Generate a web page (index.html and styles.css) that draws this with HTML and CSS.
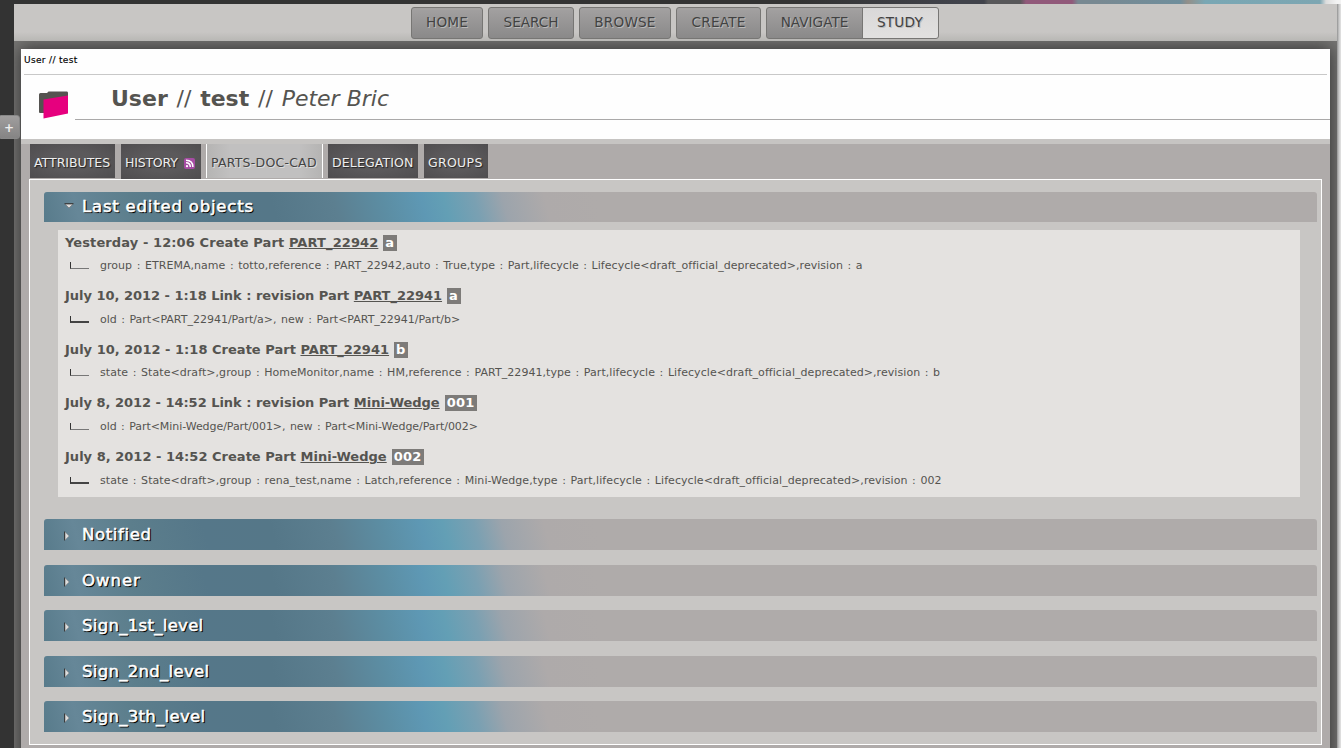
FILE: index.html
```html
<!DOCTYPE html>
<html lang="en">
<head>
<meta charset="utf-8">
<title>User // test</title>
<link rel="stylesheet" href="styles.css">
</head>
<body>
<div class="art-strip"></div>
<div class="shell">
  <nav class="nav">
    <a class="btn home">HOME</a><a class="btn search">SEARCH</a><a class="btn browse">BROWSE</a><a class="btn create">CREATE</a><a class="btn navigate">NAVIGATE</a><a class="btn study">STUDY</a>
  </nav>
  <div class="well">
    <main class="page">
      <header class="head">
        <div class="crumb"><span>User // test</span></div>
        <div class="title-row">
          <svg class="folder" width="30" height="29" viewBox="0 0 30 29"><path d="M0 3.5Q0 2 1.5 2H8L9.500 .5H28Q29 .5 29 2V22H1Q0 22 0 21Z" fill="#555350"/><path d="M4.500 5.500L29 4.500V22.500L4.500 27.500Z" fill="none"/><path d="M4.500 8.500L29 4.500V22.500L4.500 27.500Z" fill="#e6007e"/></svg>
          <h1 class="title"><b>User</b> // <b>test</b> // <i>Peter Bric</i></h1>
        </div>
      </header>
      <div class="tabs">
        <a class="tab t1"><span>ATTRIBUTES</span></a>
        <a class="tab t2"><span>HISTORY</span><svg class="rss" width="11" height="11" viewBox="0 0 11 11"><rect width="11" height="11" rx="2" fill="#a64ca3"/><circle cx="3" cy="8.200" r="1.100" fill="#fff"/><path d="M2 4.700Q6.300 4.700 6.300 9M2 2.200Q8.900 2.200 8.900 9" fill="none" stroke="#fff" stroke-width="1.500"/></svg></a>
        <a class="tab t3"><span>PARTS-DOC-CAD</span></a>
        <a class="tab t4"><span>DELEGATION</span></a>
        <a class="tab t5"><span>GROUPS</span></a>
      </div>
      <section class="panel">
        <h2 class="bar open"><svg class="arrow" width="10" height="6" viewBox="0 0 10 6"><path d="M1 1H9L5 5Z" fill="#ddd" stroke="#777" stroke-width=".7"/><path d="M.5 .7H9.500" stroke="#333"/></svg><span class="b1">Last edited objects</span></h2>
        <div class="log">
          <div class="entry"><h3><span class="l1">Yesterday - 12:06 Create Part <u>PART_22942</u></span><em>a</em></h3><p><i class="elbow"></i><span class="d1">group : ETREMA,name : totto,reference : PART_22942,auto : True,type : Part,lifecycle : Lifecycle&lt;draft_official_deprecated&gt;,revision : a</span></p></div>
          <div class="entry up"><h3><span class="l2">July 10, 2012 - 1:18 Link : revision Part <u>PART_22941</u></span><em>a</em></h3><p><i class="elbow thick"></i><span class="d2">old : Part&lt;PART_22941/Part/a&gt;, new : Part&lt;PART_22941/Part/b&gt;</span></p></div>
          <div class="entry"><h3><span class="l3">July 10, 2012 - 1:18 Create Part <u>PART_22941</u></span><em>b</em></h3><p><i class="elbow"></i><span class="d3">state : State&lt;draft&gt;,group : HomeMonitor,name : HM,reference : PART_22941,type : Part,lifecycle : Lifecycle&lt;draft_official_deprecated&gt;,revision : b</span></p></div>
          <div class="entry up"><h3><span class="l4">July 8, 2012 - 14:52 Link : revision Part <u>Mini-Wedge</u></span><em>001</em></h3><p><i class="elbow"></i><span class="d4">old : Part&lt;Mini-Wedge/Part/001&gt;, new : Part&lt;Mini-Wedge/Part/002&gt;</span></p></div>
          <div class="entry"><h3><span class="l5">July 8, 2012 - 14:52 Create Part <u>Mini-Wedge</u></span><em>002</em></h3><p class="low"><i class="elbow thick"></i><span class="d5">state : State&lt;draft&gt;,group : rena_test,name : Latch,reference : Mini-Wedge,type : Part,lifecycle : Lifecycle&lt;draft_official_deprecated&gt;,revision : 002</span></p></div>
        </div>
        <div class="closed">
          <h2 class="bar"><svg class="arrow" width="6" height="10" viewBox="0 0 6 10"><path d="M1 1V9L5 5Z" fill="#ddd" stroke="#999" stroke-width=".7"/><path d="M.6 .5V9.500" stroke="#333"/></svg><span class="b2">Notified</span></h2>
          <h2 class="bar"><svg class="arrow" width="6" height="10" viewBox="0 0 6 10"><path d="M1 1V9L5 5Z" fill="#ddd" stroke="#999" stroke-width=".7"/><path d="M.6 .5V9.500" stroke="#333"/></svg><span class="b3">Owner</span></h2>
          <h2 class="bar"><svg class="arrow" width="6" height="10" viewBox="0 0 6 10"><path d="M1 1V9L5 5Z" fill="#ddd" stroke="#999" stroke-width=".7"/><path d="M.6 .5V9.500" stroke="#333"/></svg><span>Sign_1st_level</span></h2>
          <h2 class="bar"><svg class="arrow" width="6" height="10" viewBox="0 0 6 10"><path d="M1 1V9L5 5Z" fill="#ddd" stroke="#999" stroke-width=".7"/><path d="M.6 .5V9.500" stroke="#333"/></svg><span>Sign_2nd_level</span></h2>
          <h2 class="bar"><svg class="arrow" width="6" height="10" viewBox="0 0 6 10"><path d="M1 1V9L5 5Z" fill="#ddd" stroke="#999" stroke-width=".7"/><path d="M.6 .5V9.500" stroke="#333"/></svg><span>Sign_3th_level</span></h2>
        </div>
      </section>
    </main>
  </div>
</div>
<a class="drawer">+</a>
</body>
</html>
```
FILE: styles.css
```css
* { box-sizing: border-box; }
html, body { margin: 0; height: 748px; overflow: hidden; }
body {
  font-family: "DejaVu Sans", sans-serif;
  color: #555450;
  background: linear-gradient(to right, #333 0 1337px, #929292 1337px, #c8c8c8 1339px, #e4e4e4 1341px);
}
h1, h2, h3, p { margin: 0; }
span { white-space: nowrap; }
.art-strip {
  height: 4px;
  background: linear-gradient(to right, #333 0 800px, #41434b 960px 984px, #58585a 988px 1020px, #91597a 1026px 1072px, #788992 1078px 1100px, #6f8e9c 1180px, #938f89 1188px, #79a7b4 1205px, #7da6b2 1320px, #ddd 1326px, #f3f3f3 1337px);
}
.shell { margin: 0 4px 0 14px; height: 744px; background: #c8c6c4; }
.nav {
  height: 37px;
  padding: 3px 0 0 397px;
  display: flex;
  gap: 5px;
  background: linear-gradient(#c8c6c4 28px, #b8b7b4);
}
.btn {
  height: 32px;
  border: 1px solid #777674;
  border-radius: 3px;
  background: linear-gradient(#a3a1a1, #8a8989);
  font-size: 13.6px;
  line-height: 29px;
  text-align: center;
  color: #424242;
  text-shadow: 1px 1px 0 #bbb;
}
.home { width: 72px; }
.search { width: 86px; }
.browse { width: 92px; }
.create { width: 85px; }
.navigate { width: 97px; border-radius: 3px 0 0 3px; }
.study { width: 77px; margin-left: -6px; border-radius: 0 3px 3px 0; background: linear-gradient(#d9d8d8, #e2e1e0); }
.home, .browse, .create, .study { letter-spacing: .2px; }
.study { text-indent: -1px; }
.well { height: 707px; padding: 8px 7px 0; background: #777674; overflow: hidden; }
.page { height: 720px; background: #afabaa; box-shadow: 0 0 16px 1px #333; }
.head { height: 95px; background: #fefefe; border-bottom: 5px solid #c6c4c2; }
.crumb {
  height: 26px;
  margin: 0 3px;
  border-bottom: 1px solid #c8c8c8;
  font-size: 9px;
  line-height: 22px;
  letter-spacing: .33px;
  color: #000;
  -webkit-text-stroke: .15px #000;
}
.title-row { display: flex; height: 45px; padding-left: 18px; }
.folder { margin-top: 16px; }
.title {
  flex: 1;
  margin-left: 6px;
  padding-left: 36px;
  border-bottom: 1px solid #aaa9a9;
  font-size: 22px;
  line-height: 47px;
  font-weight: normal;
  word-spacing: 1.8px;
}
.title i { word-spacing: 0; }
.tabs { display: flex; height: 35px; padding-left: 9px; }
.tab {
  height: 34px;
  padding-left: 4px;
  display: flex;
  align-items: center;
  font-size: 12.5px;
  line-height: 34px;
  color: #eee;
  text-shadow: 1px 1px 1px #222;
  background: radial-gradient(ellipse at center, #5b595b 40%, #4f4d4f 100%);
}
.tab span { padding-top: 3px; }
.t1 { width: 85px; margin-right: 6px; }
.t2 { width: 80px; height: 35px; margin-right: 5px; letter-spacing: -.2px; }
.t3 { width: 117px; margin-right: 5px; border: solid #fff; border-width: 0 1px; background: linear-gradient(to right, #b5b4b3, #c1c0c0 20% 80%, #b5b4b3); color: #444; text-shadow: 1px 1px 0 #ddd; letter-spacing: .23px; }
.t4 { width: 90px; margin-right: 6px; letter-spacing: .13px; }
.t5 { width: 64px; letter-spacing: .3px; }
.rss { margin: 4px 0 0 auto; margin-right: 6px; }
.panel {
  margin: 0 8px;
  height: 566px;
  border: 1px solid #fff;
  padding: 12px 4px 0 14px;
  background: #c8c6c4;
}
.bar {
  display: flex;
  align-items: center;
  height: 31px;
  padding-left: 20px;
  border-radius: 3px 3px 0 0;
  font-size: 16.5px;
  font-weight: normal;
  letter-spacing: .3px;
  color: #fff;
  text-shadow: 1px 1px 0 #000, 1px 1px 1px #000;
  -webkit-text-stroke: .55px #fff;
  background: linear-gradient(75deg, #587b8b 0, #668798 35px, #5c7e8c 90px, #557789 160px, #557788 225px, #5c7f90 285px, #5c8ea4 335px, #5e98b4 370px, #639fb5 392px, #7aa0b2 422px, #9ca4ac 449px, #aeaaaa 490px, #afabaa 540px);
}
.bar span { width: 200px; }
.bar .b1 { letter-spacing: .8px; padding-bottom: 2px; }
.bar .b2 { letter-spacing: .65px; }
.bar .b3 { letter-spacing: 1px; }
.bar .arrow { width: 10px; margin-right: 8px; }
.bar:not(.open) .arrow { width: 6px; margin-right: 12px; margin-top: 3px; }
.open { height: 30px; }
.open .arrow { margin-bottom: 3px; }
.log { height: 267px; margin: 8px 17px 22px 14px; padding: 0 7px; background: #e4e2e0; }
.entry { height: 53.6px; }
.entry h3 { display: flex; gap: 5px; height: 24px; padding-top: 2px; align-items: center; font-size: 13px; line-height: 16px; letter-spacing: -.02px; }
.entry.up h3 { padding: 0; }
.entry .l1 { letter-spacing: .1px; }
.entry .l3, .entry .l5 { letter-spacing: .02px; }
.entry em { height: 16px; min-width: 14px; padding: 0 2px; font-style: normal; letter-spacing: .25px; color: #fff; background: #7d7b79; }
.entry p { display: flex; height: 23px; font-size: 11px; line-height: 23px; word-spacing: 1px; }
.entry .low { padding-top: 1px; }
.d1 { letter-spacing: .04px; }
.d3 { letter-spacing: .06px; }
.d4 { letter-spacing: -.05px; }
.d5 { letter-spacing: .07px; }
.elbow { width: 19px; height: 7px; margin: 8px 11px 0 5px; border-left: 1px solid #333; border-bottom: 1px solid #777; }
.elbow.thick { border-bottom: 2px solid #444; }
.closed { display: grid; gap: 14.5px; }
.drawer {
  position: absolute;
  left: -2px;
  top: 115px;
  width: 22px;
  height: 24px;
  border: 1px solid #888;
  border-radius: 3px;
  background: linear-gradient(#a09e9e, #858484);
  color: #eee;
  font-size: 12px;
  font-weight: bold;
  line-height: 25px;
  text-align: center;
}
```
